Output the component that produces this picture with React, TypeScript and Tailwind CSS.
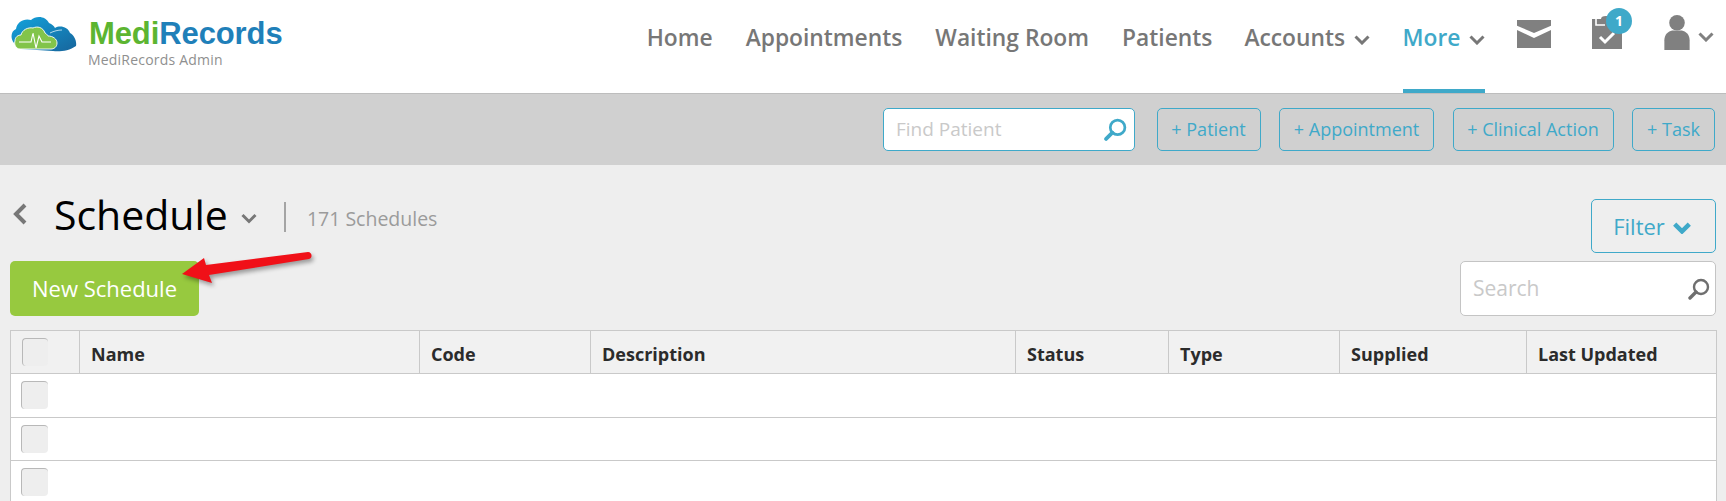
const navItems = [
  { label: 'Home', gap: 'mr-[33px]' },
  { label: 'Appointments', gap: 'mr-[33px]' },
  { label: 'Waiting Room', gap: 'mr-[33px]' },
  { label: 'Patients', gap: 'mr-[32px]' },
  { label: 'Accounts', caret: true, gap: 'mr-[32.5px]' },
  { label: 'More', caret: true, active: true, gap: 'mr-[33px]' },
]

const quickActions = [
  { label: '+ Patient', width: 'w-[104px]' },
  { label: '+ Appointment', width: 'w-[155px]' },
  { label: '+ Clinical Action', width: 'w-[161px]' },
  { label: '+ Task', width: 'w-[83px]' },
]

const columns = [
  { label: '', width: 'w-[69px]' },
  { label: 'Name', width: 'w-[340px]' },
  { label: 'Code', width: 'w-[171px]' },
  { label: 'Description', width: 'w-[425px]' },
  { label: 'Status', width: 'w-[153px]' },
  { label: 'Type', width: 'w-[171px]' },
  { label: 'Supplied', width: 'w-[187px]' },
  { label: 'Last Updated', width: 'w-[190px]' },
]

function Chevron({ className = '', strokeWidth = 3 }: { className?: string; strokeWidth?: number }) {
  return (
    <svg viewBox="0 0 16 10" className={className} fill="none" stroke="currentColor" strokeWidth={strokeWidth}>
      <path d="M1.5 1.5 8 8l6.5-6.5" />
    </svg>
  )
}

function SearchIcon({ className = '', strokeWidth = 2.4 }: { className?: string; strokeWidth?: number }) {
  return (
    <svg viewBox="0 0 22 22" className={className} fill="none" stroke="currentColor" strokeWidth={strokeWidth}>
      <circle cx="13" cy="9" r="7" />
      <path d="M8 14 2 20" strokeWidth={strokeWidth + 1} strokeLinecap="round" />
    </svg>
  )
}

function Logo() {
  return (
    <div className="flex items-start pl-[11px] pt-[15px]">
      <svg viewBox="0 -1 66 37" className="w-[66px] h-[37px] shrink-0">
        <defs>
          <linearGradient id="cloudBlue" x1="0" y1="0" x2="1" y2="1">
            <stop offset="0" stopColor="#12a3dc" />
            <stop offset="1" stopColor="#17659c" />
          </linearGradient>
        </defs>
        <path
          d="M3 27C-1 22 0 15 5 13 6 6 13 2 20 4 25-1 35 0 38 7 41 8 43 10 44 12 49 9 57 11 59 17 63 19 66 25 65 30 58 35 48 36 42 35L10 33Z"
          fill="url(#cloudBlue)"
        />
        <path d="M39 17c4-2 8-3 12-3" fill="none" stroke="#d8eef7" strokeWidth="0.8" />
        <path
          d="M9 33C4 33 3 27 4 25 4 21 7 19 10 19 11 14 17 11 22 12 26 10 32 11 34 17 36 18 37 20 37 20 42 20 46 23 46 27 46 31 43 33 40 33Z"
          fill="#82c44a"
          stroke="#fff"
          strokeWidth="0.9"
        />
        <path d="M8 26h12l2-9 3 15 3-12 3 6h9" fill="none" stroke="#fff" strokeWidth="1.1" />
      </svg>
      <div className="ml-[12px]">
        <div className="text-[31px] leading-[37px] font-bold tracking-[-0.1px] font-['Liberation_Sans',sans-serif]">
          <span className="text-[#5cb531]">Medi</span>
          <span className="text-[#1f80b9]">Records</span>
        </div>
        <div className="text-[14px] leading-[14px] mt-[1px] -ml-[1px] text-[#8f8f8f] tracking-[0.2px]">MediRecords Admin</div>
      </div>
    </div>
  )
}

function Header() {
  return (
    <header className="h-[94px] bg-white border-b border-[#bdbdbd] flex justify-between">
      <Logo />
      <nav className="flex items-start">
        {navItems.map(item => (
          <a
            key={item.label}
            className={`h-[93px] ${item.gap} flex items-start pt-[22px] text-[22.8px] leading-[32px] font-semibold ${item.active ? 'text-[#3fa9c9] border-b-[4px] border-[#3fa9c9]' : 'text-[#777777]'}`}
          >
            {item.label}
            {item.caret && <Chevron className={`w-[16px] h-[10px] mt-[13px] text-[#777] ${item.active ? 'ml-[8.5px]' : 'ml-[9px]'}`} />}
          </a>
        ))}
        <svg viewBox="0 0 34 28" className="w-[34px] h-[28px] mt-[20px] ml-[-1px] text-[#808080]" fill="currentColor">
          <path d="M0 0h34v5.7L17 13 0 5.7z" />
          <path d="M0 10l17 8 17-8v18H0z" />
        </svg>
        <div className="relative ml-[41px] mt-[19px] w-[30px] h-[30px]">
          <svg viewBox="0 -3 30 33" className="w-[30px] h-[33px] -mt-[3px] text-[#808080]" fill="currentColor">
            <path d="M0 0h30v30H0z" />
            <path d="M4 0v6h9" fill="none" stroke="#fff" strokeWidth="1.6" />
            <path d="M9 0a5 3 0 0 1 10 0z" />
            <path d="M8 18l5 5 9-9" fill="none" stroke="#fff" strokeWidth="3" />
          </svg>
          <span className="absolute -top-[11px] left-[14px] w-[26px] h-[26px] rounded-full bg-[#3fa9c9] text-white text-[14px] leading-[26px] font-bold text-center">1</span>
        </div>
        <svg viewBox="0 0 26 36" className="w-[26px] h-[35px] ml-[42px] mt-[15px] text-[#808080]" fill="currentColor">
          <circle cx="13" cy="8" r="8" />
          <path d="M0 36V26c0-6 4-9 8-10h10c4 1 8 4 8 10v10c-8 1-18 1-26 0z" />
        </svg>
        <Chevron className="w-[16px] h-[10px] ml-[8px] mt-[32px] mr-[12px] text-[#808080]" />
      </nav>
    </header>
  )
}

function ActionBar() {
  return (
    <div className="h-[71px] bg-[#d0d0d0] flex justify-end items-start pt-[14px] pr-[11px] gap-[18.5px]">
      <div className="w-[252px] h-[43px] mr-[3px] bg-white border border-[#3fa9c9] rounded-[5px] flex items-center justify-between pl-[12px] pr-[7px]">
        <span className="text-[19px] text-[#c9c9c9]">Find Patient</span>
        <SearchIcon className="w-[23px] h-[23px] text-[#3fa9c9]" strokeWidth={2.6} />
      </div>
      {quickActions.map(action => (
        <button key={action.label} className={`${action.width} h-[43px] border border-[#3fa9c9] rounded-[5px] text-[18px] text-[#3fa9c9]`}>
          {action.label}
        </button>
      ))}
    </div>
  )
}

function ScheduleTable() {
  return (
    <table className="w-full table-fixed border-collapse">
      <colgroup>
        {columns.map((c, i) => (
          <col key={i} className={c.width} />
        ))}
      </colgroup>
      <thead>
        <tr className="h-[43px] bg-[#f1f1f1]">
          {columns.map((c, i) => (
            <th key={i} className="border border-[#c9c9c9] px-[11px] pt-[4px] text-left text-[18px] font-bold text-[#2b2b2b]">
              {i === 0 ? <div className="w-[26px] h-[28px] -mt-[4px] rounded-[4px] border border-[#b8b8b8] border-r-0 border-b-0 bg-[#eeeeee]" /> : c.label}
            </th>
          ))}
        </tr>
      </thead>
      <tbody>
        {[0, 1, 2].map(row => (
          <tr key={row} className="h-[43.5px] bg-white">
            <td className="border-l border-b border-[#c9c9c9] pl-[10px]">
              <div className="w-[27px] h-[28px] rounded-[4px] border border-[#b8b8b8] border-r-0 border-b-0 bg-[#eeeeee]" />
            </td>
            {columns.slice(1).map((c, i) => (
              <td key={i} className={`border-b border-[#c9c9c9] ${i === 6 ? 'border-r' : ''}`} />
            ))}
          </tr>
        ))}
      </tbody>
    </table>
  )
}

export default function App() {
  return (
    <div className="relative w-[1726px] h-[501px] overflow-hidden bg-[#eeeeee] font-['Open_Sans',sans-serif]">
      <Header />
      <ActionBar />
      <main className="px-[10px]">
        <div className="flex justify-between pt-[34px]">
          <div>
            <div className="h-[54px] flex items-center -mt-[12px] mb-[20px]">
              <svg viewBox="0 0 15 22" className="w-[15px] h-[22px] ml-[2px] text-[#777]" fill="none" stroke="currentColor" strokeWidth="4">
                <path d="M13 2 4 11l9 9" />
              </svg>
              <h1 className="ml-[27px] text-[41px] leading-[54px] text-black">Schedule</h1>
              <Chevron className="w-[16px] h-[11px] ml-[13px] mt-[8px] text-[#777]" />
              <span className="ml-[27px] mt-[6px] w-[2px] h-[30px] bg-[#a4a4a4]" />
              <span className="ml-[21px] mt-[9px] text-[19.5px] text-[#9b9b9b]">171 Schedules</span>
            </div>
            <button className="w-[189px] h-[55px] rounded-[5px] bg-[#97c93f] text-white text-[22px]">New Schedule</button>
          </div>
          <div className="flex flex-col items-end">
            <button className="w-[125px] h-[54px] pr-[3px] rounded-[5px] border border-[#3fa9c9] text-[#3fa9c9] text-[22px] flex items-center justify-center gap-[8px]">
              Filter
              <Chevron className="w-[18px] h-[12px] mt-[3px]" strokeWidth={4} />
            </button>
            <div className="mt-[8px] w-[256px] h-[55px] bg-white border border-[#c4c4c4] rounded-[5px] flex items-center justify-between pl-[12px] pr-[5px]">
              <span className="text-[21px] text-[#c9c9c9]">Search</span>
              <SearchIcon className="w-[22px] h-[22px] text-[#6f6f6f]" />
            </div>
          </div>
        </div>
        <div className="mt-[14px]">
          <ScheduleTable />
        </div>
      </main>
      <svg viewBox="0 0 140 40" className="absolute left-[178px] top-[247px] w-[140px] h-[40px] drop-shadow-[2px_3px_2px_rgba(0,0,0,0.35)]">
        <path d="M4 27 26 11l2 7 102-13c4 0 5 6 1 7L31 28l3 8z" fill="#f01018" />
      </svg>
    </div>
  )
}
